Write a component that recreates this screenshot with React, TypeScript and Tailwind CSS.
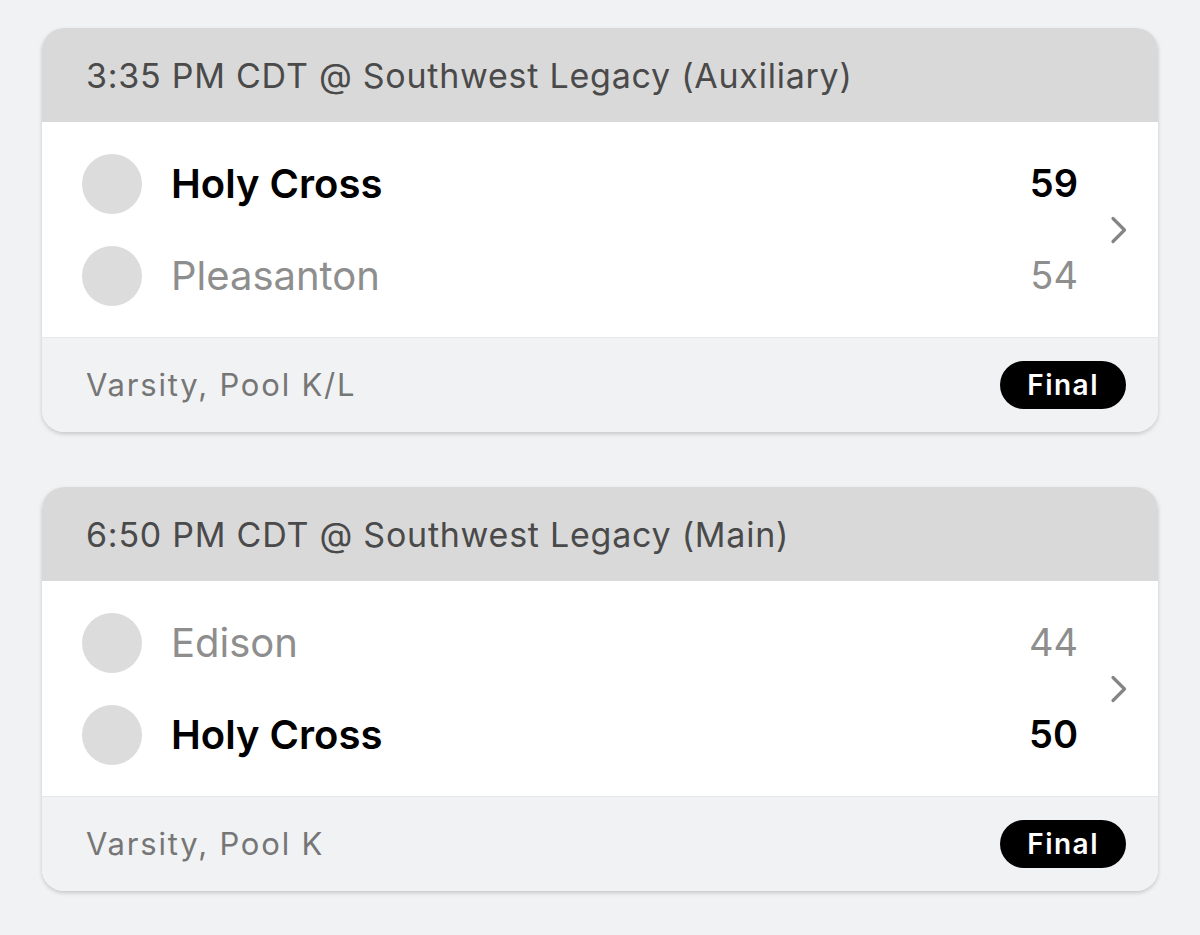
import React from "react";

type Team = { name: string; score: number; win: boolean };
type Game = { header: string; teams: Team[]; footer: string };

const games: Game[] = [
  {
    header: "3:35 PM CDT @ Southwest Legacy (Auxiliary)",
    teams: [
      { name: "Holy Cross", score: 59, win: true },
      { name: "Pleasanton", score: 54, win: false },
    ],
    footer: "Varsity, Pool K/L",
  },
  {
    header: "6:50 PM CDT @ Southwest Legacy (Main)",
    teams: [
      { name: "Edison", score: 44, win: false },
      { name: "Holy Cross", score: 50, win: true },
    ],
    footer: "Varsity, Pool K",
  },
];

function Card({ g }: { g: Game }) {
  return (
    <div className="rounded-[22px] overflow-hidden bg-white shadow-[0_2px_4px_rgba(0,0,0,0.18)]">
      <div className="h-[94px] bg-[#d9d9d9] flex items-center pl-[44px] text-[34px] text-[#4a4a4a] tracking-[0.75px]">
        {g.header}
      </div>
      <div className="h-[215px] flex items-center pl-[40px] pr-[30px]">
        <div className="flex-1 flex flex-col gap-[32px]">
          {g.teams.map((t, i) => (
            <div key={i} className="flex items-center h-[60px]">
              <div className="w-[60px] h-[60px] rounded-full bg-[#dcdcdc]" />
              <div
                className={
                  "ml-[29px] flex-1 text-[40px] " +
                  (t.win ? "font-semibold text-black" : "text-[#8e8e8e]")
                }
              >
                {t.name}
              </div>
              <div
                className={
                  "text-[38px] " + (t.win ? "font-semibold text-black" : "text-[#8e8e8e]")
                }
              >
                {t.score}
              </div>
            </div>
          ))}
        </div>
        <svg width="18" height="28" viewBox="0 0 18 28" className="ml-[32px]">
          <path d="M3 2.5 L14.5 14 L3 25.5" fill="none" stroke="#858585" strokeWidth="3.2" strokeLinecap="round" strokeLinejoin="round" />
        </svg>
      </div>
      <div className="h-[95px] bg-[#f1f2f4] border-t border-[#e8e8ea] flex items-center justify-between pl-[44px] pr-[32px]">
        <span className="text-[31px] text-[#767676] tracking-[1.8px]">{g.footer}</span>
        <span className="h-[48px] px-[27px] rounded-full bg-black text-white text-[28px] font-semibold tracking-[1.5px] flex items-center">
          Final
        </span>
      </div>
    </div>
  );
}

export default function App() {
  return (
    <div
      className="min-h-[935px] bg-[#f1f2f4] px-[42px] pt-[28px] flex flex-col gap-[55px]"
      style={{ fontFamily: "Inter, 'Noto Sans', sans-serif" }}
    >
      {games.map((g, i) => (
        <Card key={i} g={g} />
      ))}
    </div>
  );
}
